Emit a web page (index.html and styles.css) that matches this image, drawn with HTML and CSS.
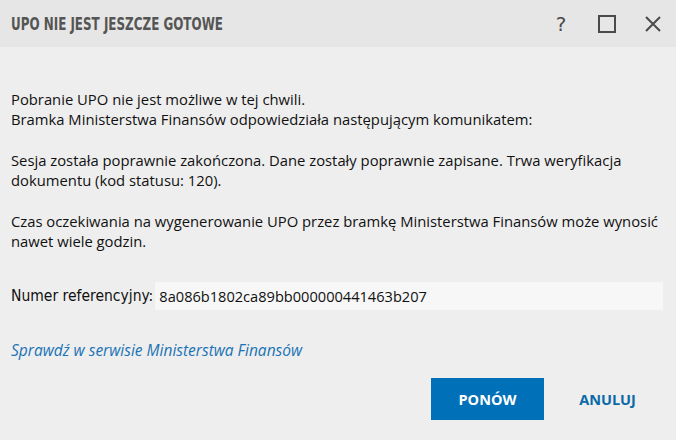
FILE: index.html
```html
<!DOCTYPE html>
<html lang="pl">
<head>
    <meta charset="UTF-8">
    <title>UPO nie jest jeszcze gotowe</title>
    <link rel="stylesheet" href="styles.css">
</head>
<body>
    <div class="dialog">
        <div class="header">
            <h1 class="title">UPO NIE JEST JESZCZE GOTOWE</h1>
            <div class="controls">
                <span class="ctrl help">?</span>
                <span class="ctrl"><svg width="18" height="18" viewBox="0 0 18 18"><rect x="1" y="1" width="16" height="16" fill="none" stroke="#4a4a4a" stroke-width="2"/></svg></span>
                <span class="ctrl"><svg width="18" height="18" viewBox="0 0 18 18"><path d="M2 2 L16 16 M16 2 L2 16" stroke="#4a4a4a" stroke-width="2"/></svg></span>
            </div>
        </div>
        <div class="content">
            <p>Pobranie UPO nie jest możliwe w tej chwili.<br>Bramka Ministerstwa Finansów odpowiedziała następującym komunikatem:</p>
            <p>Sesja została poprawnie zakończona. Dane zostały poprawnie zapisane. Trwa weryfikacja dokumentu (kod statusu: 120).</p>
            <p>Czas oczekiwania na wygenerowanie UPO przez bramkę Ministerstwa Finansów może wynosić nawet wiele godzin.</p>
            <div class="ref-row">
                <label class="ref-label">Numer referencyjny:</label>
                <div class="ref-value">8a086b1802ca89bb000000441463b207</div>
            </div>
            <a class="mf-link" href="#">Sprawdź w serwisie Ministerstwa Finansów</a>
            <div class="buttons">
                <button class="btn primary">PONÓW</button>
                <button class="btn flat">ANULUJ</button>
            </div>
        </div>
    </div>
</body>
</html>
```

FILE: styles.css
```css
body {margin: 0; font-family: "Open Sans", "Noto Sans", sans-serif; color: #111111; background: #eeeeee;}
.dialog {width: 676px; height: 440px; background: #eeeeee; overflow: hidden;}
.header {height: 47px; background: #e6e6e6; display: flex; align-items: center; justify-content: space-between; padding: 0 14px 0 11px;}
.title {margin: 0; font-size: 17px; font-weight: 700; color: #555555; font-family: "DejaVu Sans Condensed", sans-serif; transform: scaleX(0.78); transform-origin: left center; white-space: nowrap;}
.controls {display: flex; align-items: center; gap: 28px;}
.ctrl {display: flex; align-items: center; justify-content: center; width: 18px; height: 18px; color: #4a4a4a;}
.help {font-size: 20px; font-family: "DejaVu Sans", sans-serif;}
.content {padding: 42px 4px 0 11px; font-size: 14.8px; line-height: 20px;}
.content p {margin: 0 0 21px 0;}
.ref-row {display: flex; align-items: center; margin: 31px 9px 0 0; height: 28px;}
.ref-label {font-family: "DejaVu Sans Condensed", sans-serif; font-size: 15.5px; margin-right: 2px;}
.ref-value {flex: 1; background: #f7f7f7; height: 28px; line-height: 28px; padding-left: 4px; font-size: 14.6px;}
.mf-link {display: block; margin-top: 30px; color: #1a73b5; font-style: italic; font-size: 15.5px; text-decoration: none; width: fit-content;}
.buttons {display: flex; justify-content: flex-end; gap: 7px; margin: 18px 8px 0 0;}
.btn {width: 113px; height: 42px; border: 0; font-family: "Open Sans", sans-serif; font-weight: 700; font-size: 14.5px; cursor: pointer;}
.primary {background: #0070b8; color: #ffffff;}
.flat {background: transparent; color: #0a6aa8;}
```
